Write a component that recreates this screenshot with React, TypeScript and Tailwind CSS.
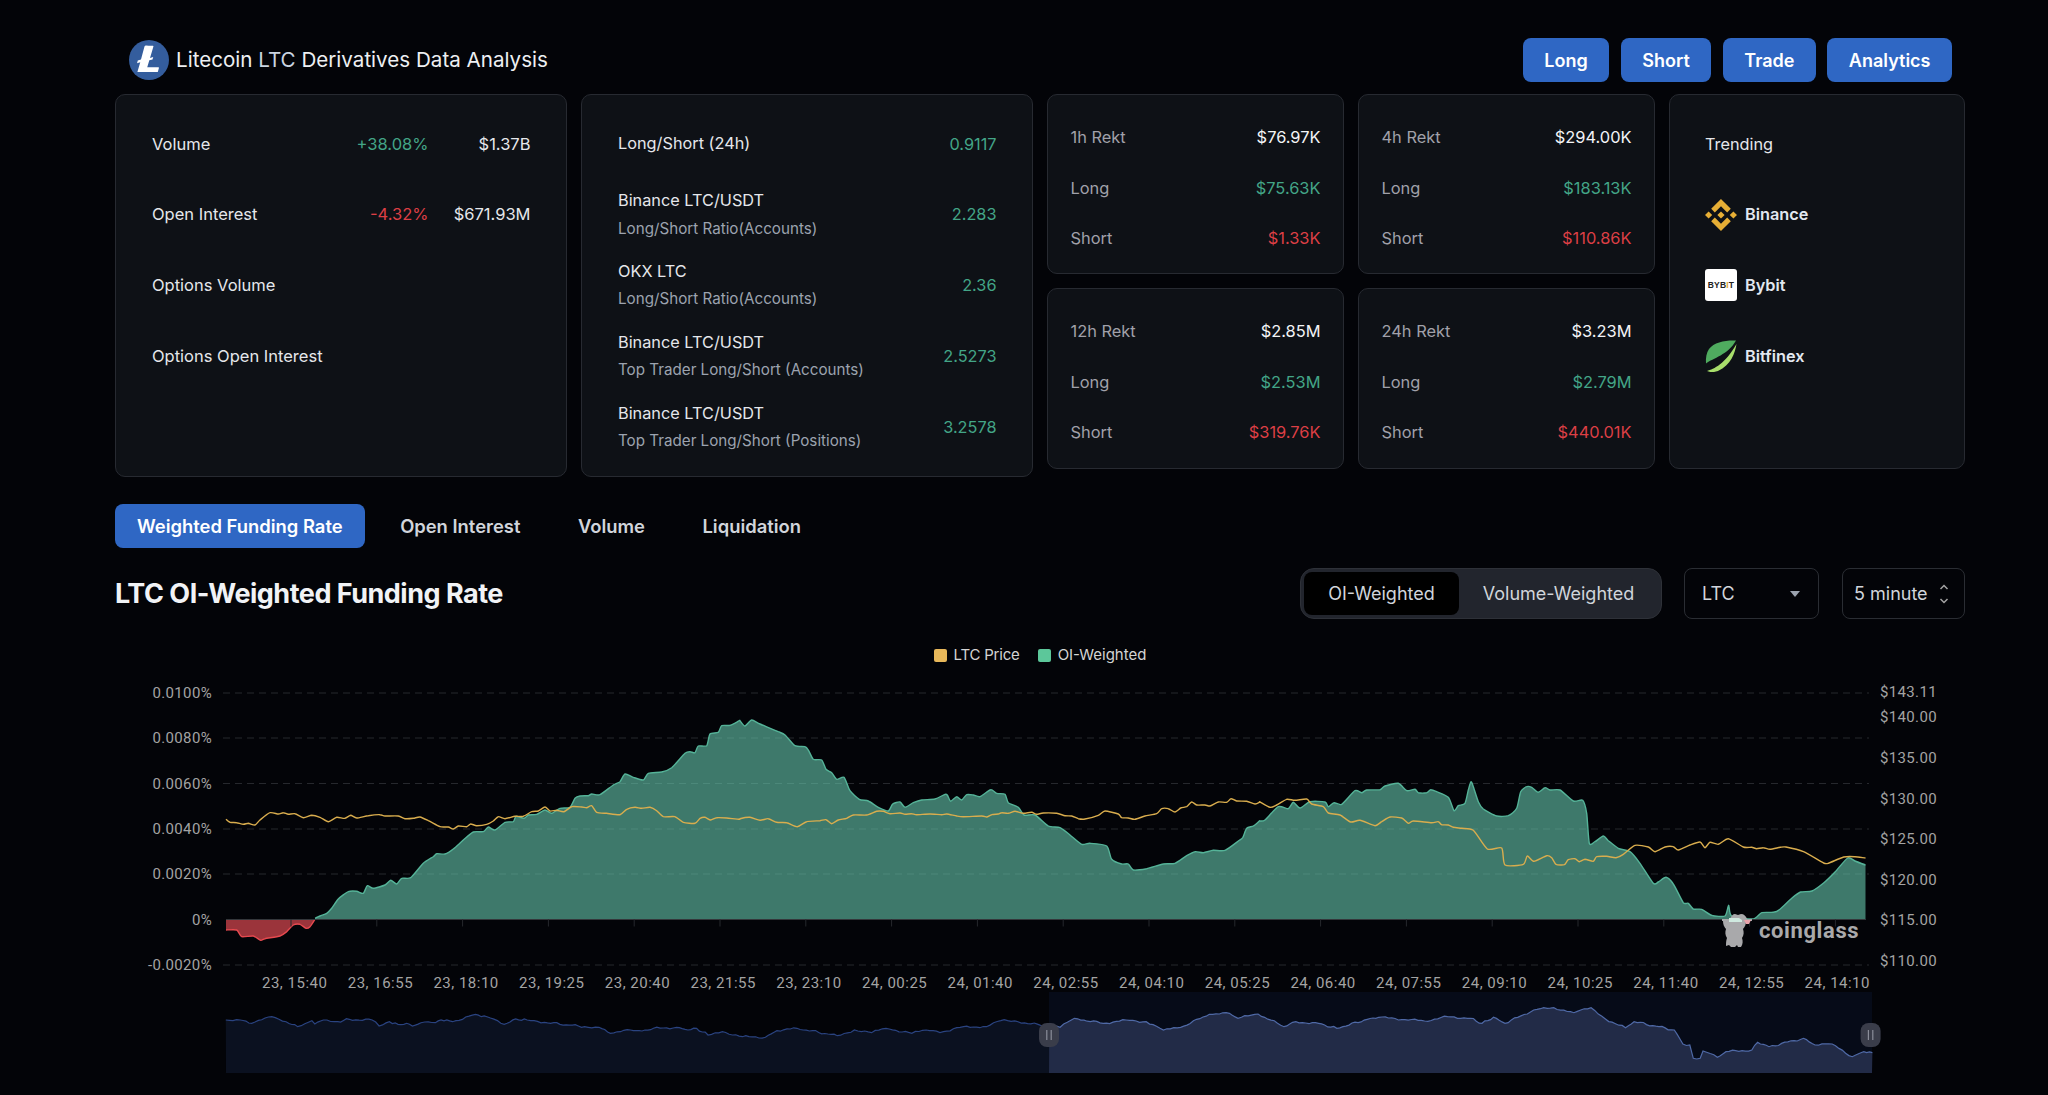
import React from "react";

type P = [number, number];
const map = (a: number[], ox: number, oy: number, sx = 3, sy = 3): P[] => {
  const r: P[] = [];
  for (let i = 0; i < a.length; i += 2) r.push([ox + a[i] / sx, oy + a[i + 1] / sy]);
  return r;
};

const smooth = (p: P[]) => {
  let d = `M${p[0][0].toFixed(1)} ${p[0][1].toFixed(1)}`;
  const k = 1 / 9;
  for (let i = 0; i < p.length - 1; i++) {
    const p0 = p[i - 1] || p[i];
    const p1 = p[i];
    const p2 = p[i + 1];
    const p3 = p[i + 2] || p2;
    const c1x = p1[0] + (p2[0] - p0[0]) * k;
    const c1y = p1[1] + (p2[1] - p0[1]) * k;
    const c2x = p2[0] - (p3[0] - p1[0]) * k;
    const c2y = p2[1] - (p3[1] - p1[1]) * k;
    d += `C${c1x.toFixed(1)} ${c1y.toFixed(1)} ${c2x.toFixed(1)} ${c2y.toFixed(1)} ${p2[0].toFixed(1)} ${p2[1].toFixed(1)}`;
  }
  return d;
};

// the overview line of the slider has a fine jagged texture
const jag = (p: P[]): P[] => {
  const out: P[] = [];
  for (let i = 0; i < p.length - 1; i++) {
    const [x0, y0] = p[i];
    const [x1, y1] = p[i + 1];
    const n = Math.max(1, Math.round((x1 - x0) / 3.2));
    for (let j = 0; j < n; j++) {
      const t = j / n;
      const x = x0 + (x1 - x0) * t;
      const noise = j === 0 ? 0 : Math.sin(x * 1.7) * 0.7 + Math.sin(x * 0.63) * 0.5;
      out.push([x, y0 + (y1 - y0) * t + noise]);
    }
  }
  out.push(p[p.length - 1]);
  return out;
};

const BASE = 919.5;

const negArea = map([18,690,50,690,65,710,100,708,122,721,135,716,180,708,200,695,220,675,240,673,258,685,270,680,285,658], 220, 700);

const posArea: P[] = [
  ...map([285,655,300,648,320,640,335,625,355,597,385,575,410,574,430,580,442,557,460,565,495,555,512,541,530,552,545,535,572,533,610,490,640,470,650,461,675,462,700,447,730,420,760,396,790,395,805,381,825,390,855,367,880,365,888,349,912,355,925,345,950,343,975,330,995,340,1020,325,1050,322,1065,295,1080,288,1105,287,1115,282,1140,284,1180,255,1200,245,1215,222,1240,232,1270,240,1285,220,1325,216,1355,203,1395,160,1410,155,1425,158,1435,138,1460,137,1470,102,1495,97,1505,77,1530,76,1558,62], 220, 700),
  ...map([0,62,15,78,35,60,60,72,115,95,135,105,165,137,195,140,205,150,220,178,245,180,258,208,275,218,290,238,312,232,330,272,358,298,385,303,415,322,445,333,458,312,480,306,495,322,520,308,545,300,585,297,615,283,622,285,632,304,650,290,665,300,680,284,700,285,720,290,752,269,770,280,795,283,805,308,835,322,852,345,885,345,925,378,960,383,990,405,1025,433,1050,430,1100,438,1115,478,1145,492,1165,492,1180,510,1220,506,1270,492,1305,490,1340,467,1365,455,1390,458,1420,451,1455,451,1495,423,1508,413,1520,385,1540,378,1558,363], 740, 700),
  ...map([0,243,15,240,55,200,85,206,100,187,120,204,150,185,195,186,205,200,222,188,245,193,285,152,305,158,320,150,360,149,375,138,415,130,440,152,465,148,475,158,500,158,512,149,530,155,565,172,582,212,595,197,615,190,625,150,633,125,640,140,655,185,670,207,710,228,745,227,770,205,782,155,800,140,815,142,835,157,855,143,870,150,900,150,940,183,968,181,980,220,988,310,1005,305,1030,288,1045,302,1075,325,1110,335,1140,370,1180,430,1195,426,1218,412,1240,432,1270,488,1285,490,1300,507,1325,508,1355,526,1395,528,1406,496,1415,528,1480,537,1505,518,1540,517,1560,508], 1260, 740),
  [1792,898],[1800.6,892],[1812,891],[1823.6,883],[1835,872],[1847.7,858],[1855,861],[1865.5,865],
];

const price: P[] = [
  ...map([18,358,30,367,50,368,70,373,85,370,105,375,120,360,150,338,175,342,190,338,205,343,225,341,250,353,275,346,300,352,325,365,350,352,375,355,392,346,410,354,445,347,480,344,495,348,535,348,555,356,580,355,600,351,625,362,660,380,685,381,700,387,715,378,740,380,752,372,770,377,800,373,820,363,835,350,855,356,885,349,910,349,935,335,955,333,975,321,990,333,1010,331,1032,335,1055,320,1085,321,1100,323,1115,317,1130,337,1160,340,1200,344,1220,328,1245,322,1265,325,1290,322,1310,332,1330,350,1365,350,1390,367,1425,370,1440,355,1455,352,1472,360,1490,353,1520,354,1558,358], 220, 700),
  ...map([0,356,30,352,60,361,85,356,110,367,140,368,172,380,200,365,240,362,258,359,275,371,295,360,320,355,340,345,380,345,410,334,430,334,450,341,480,339,495,343,515,341,530,344,570,342,605,344,620,342,650,348,670,350,725,348,740,351,755,344,775,342,785,338,805,340,825,334,850,340,875,337,890,343,910,339,950,340,975,347,995,348,1015,356,1035,357,1075,346,1095,333,1135,342,1145,353,1165,354,1185,358,1215,348,1250,341,1265,326,1285,326,1305,336,1322,324,1340,320,1355,306,1370,315,1395,315,1410,318,1435,306,1460,307,1473,296,1490,303,1520,304,1545,312,1558,307], 740, 700),
  ...map([0,186,30,202,50,195,80,178,105,181,140,177,155,192,190,200,205,219,240,225,272,246,300,241,345,257,365,245,390,231,425,234,445,250,460,243,515,248,535,245,545,254,565,255,580,262,605,265,640,271,682,327,725,324,735,375,790,373,802,348,822,364,860,347,875,353,888,373,913,374,925,359,945,356,958,365,975,358,1000,364,1010,350,1040,349,1068,353,1090,343,1125,316,1165,321,1185,335,1215,321,1240,320,1255,330,1290,315,1320,306,1335,323,1350,307,1375,313,1405,296,1450,321,1475,322,1490,326,1510,323,1530,328,1560,322], 1260, 740),
  [1786,847],[1803.5,851.7],[1823.6,863],[1829,863],[1843.7,857],[1855,856.7],[1865.5,858],
];

const sliderLeft = jag(map([45,540,70,540,90,550,125,530,150,545,170,560,195,542,200,552,215,540,240,545,260,538,300,540,312,558,330,545,345,553,360,550,370,558,385,548,410,548,420,540,440,545,480,523,500,530,530,553,550,537,570,540,600,547,670,560,695,562,715,580,750,570,770,573,790,565,830,562,850,570,865,565,885,585,910,575,945,590,985,592,1005,572,1040,565,1110,587,1140,570,1170,578,1195,565,1240,580,1265,570,1295,575,1330,560,1370,560,1395,542,1425,545,1470,557,1479,558], 200, 840, 1.742, 3));
const sliderRight = jag(map([16,558,35,562,60,535,110,550,150,540,185,545,215,570,245,562,295,523,330,520,345,535,380,522,425,560,440,547,480,548,517,565,570,538,590,532,670,543,710,530,750,535,770,550,790,532,810,550,860,510,895,503,930,518,960,503,985,537,1020,563,1035,545,1105,570,1120,612,1132,615,1138,655,1150,655,1155,633,1180,652,1195,635,1240,630,1250,607,1270,620,1330,595,1350,615,1380,612,1415,650,1435,635,1450,638], 1040, 840, 1.742, 3));

const line = (p: P[]) => p.map((q) => `${q[0].toFixed(1)},${q[1].toFixed(1)}`).join(" ");

const xLabels = ["23, 15:40","23, 16:55","23, 18:10","23, 19:25","23, 20:40","23, 21:55","23, 23:10","24, 00:25","24, 01:40","24, 02:55","24, 04:10","24, 05:25","24, 06:40","24, 07:55","24, 09:10","24, 10:25","24, 11:40","24, 12:55","24, 14:10"];
const leftLabels: [string, number][] = [["0.0100%",693],["0.0080%",738],["0.0060%",783.5],["0.0040%",829],["0.0020%",874],["0%",919.5],["-0.0020%",965]];
const rightLabels: [string, number][] = [["$143.11",692],["$140.00",717],["$135.00",758],["$130.00",799],["$125.00",839],["$120.00",880],["$115.00",920],["$110.00",961]];

function Chart() {
  return (
    <svg viewBox="115 666 1850 414" className="block w-[1850px] h-[414px]" style={{ fontFamily: "Roboto, sans-serif" }}>
      {leftLabels.filter((l) => l[0] !== "0%").map(([, y]) => (
        <line key={y} x1="223" x2="1869" y1={y} y2={y} stroke="#26282d" strokeWidth="1" strokeDasharray="7 5" />
      ))}
      <path d={smooth(posArea) + `L1865.5 ${BASE}L${posArea[0][0]} ${BASE}Z`} fill="#65c8ae" fillOpacity="0.6" />
      <path d={smooth(negArea) + `L226 ${BASE}L226 ${negArea[0][1]}Z`} fill="#f9525a" fillOpacity="0.62" />
      <path d={smooth(posArea)} fill="none" stroke="#55b398" strokeWidth="1.4" />
      <path d={smooth(negArea)} fill="none" stroke="#e6494f" strokeWidth="1.4" />
      <line x1="226" x2="1866" y1={BASE} y2={BASE} stroke="#34373b" strokeWidth="1.2" />
      {xLabels.map((_, i) => (
        <line key={i} x1={291 + i * 85.8} x2={291 + i * 85.8} y1={BASE} y2={BASE + 7} stroke="#26282d" />
      ))}
      <path d={smooth(price)} fill="none" stroke="#d9ad4e" strokeWidth="1.4" />

      {/* watermark mascot */}
      <g>
        <path d="M1722 919h8c1-3 3-5 5-5l3 1 3-1c3 0 5 2 6 5h5v2h-6c0 3-1 6-3 8 1 3 1 6-1 9 1 3 1 6-1 9h-3l-1-2-2 2h-4l-2-2-3 1c0-3 0-5 1-8-2-3-2-6-1-9-2-2-3-5-3-8h-1z" fill="#a9a9ab" />
        <path d="M1729 918h10l3 2v2h-13z" fill="#cfe9df" />
        <path d="M1744 920h7l-2 4h-3z" fill="#e9a3ab" />
      </g>
      <text x="1759" y="938" fontSize="22" fontWeight="700" fill="#a9a9ab" letterSpacing="0.6">coinglass</text>

      {leftLabels.map(([t, y]) => (
        <text key={t} x="212" y={y + 5} textAnchor="end" fontSize="15" fill="#a3a3a3" letterSpacing="0.35">{t}</text>
      ))}
      {rightLabels.map(([t, y]) => (
        <text key={t} x="1880" y={y + 5} fontSize="15" fill="#a3a3a3" letterSpacing="0.35">{t}</text>
      ))}
      {xLabels.map((t, i) => (
        <text key={t} x={294.7 + i * 85.7} y="988" textAnchor="middle" fontSize="15" fill="#a3a3a3" letterSpacing="0.5">{t}</text>
      ))}

      {/* range slider */}
      <rect x="1049" y="992" width="823" height="81" fill="#060b18" />
      <polygon points={`226,1073 ${line(sliderLeft)} 1049,1073`} fill="#0b1120" />
      <polygon points={`1049,1073 ${line(sliderRight)} 1872,1073`} fill="#222b47" />
      <polyline points={line(sliderLeft)} fill="none" stroke="#2a4380" strokeWidth="1.2" />
      <polyline points={line(sliderRight)} fill="none" stroke="#4f69a6" strokeWidth="1.2" />
      {[1049, 1870.6].map((x) => (
        <g key={x}>
          <rect x={x - 10} y="1023" width="20" height="24" rx="8" fill="#3a3d4a" />
          <line x1={x - 2.2} x2={x - 2.2} y1="1030" y2="1040" stroke="#8b8e9a" strokeWidth="1.2" />
          <line x1={x + 2.2} x2={x + 2.2} y1="1030" y2="1040" stroke="#8b8e9a" strokeWidth="1.2" />
        </g>
      ))}
    </svg>
  );
}

const G = "text-[#43a587]";
const R = "text-[#dc3f45]";
const card = "bg-[#0e1116] border border-[#272a31] rounded-[10px]";

function Btn({ children }: { children: React.ReactNode }) {
  return (
    <div className="h-[44px] px-[21.5px] flex items-center bg-[#2f67c4] rounded-[8px] text-white text-[18px] font-semibold">
      {children}
    </div>
  );
}

function Stat({ label, pct, pctClass, val }: { label: string; pct?: string; pctClass?: string; val?: string }) {
  return (
    <div className="h-[70.8px] flex items-center text-[16.5px] text-[#e5e7eb]">
      <span className="flex-1">{label}</span>
      {pct && <span className={`${pctClass}`}>{pct}</span>}
      {val && <span className="w-[102px] text-right">{val}</span>}
    </div>
  );
}

function Ratio({ a, b, v }: { a: string; b?: string; v: string }) {
  return (
    <div className="h-[70.8px] flex items-center justify-between">
      <div>
        <div className="text-[16.3px] leading-[27.5px] text-[#e5e7eb]">{a}</div>
        {b && <div className="text-[15.2px] leading-[27.5px] text-[#9ca3af]">{b}</div>}
      </div>
      <span className={`text-[16.3px] ${G}`}>{v}</span>
    </div>
  );
}

function Rekt({ t, v, l, s }: { t: string; v: string; l: string; s: string }) {
  const row = "h-[50.5px] flex items-center justify-between text-[16.4px]";
  return (
    <div className={`${card} pl-[22.5px] pr-[22px] pt-[17.5px]`}>
      <div className={row}>
        <span className="text-[#a1a1aa]">{t}</span>
        <span className="text-[#f3f4f6]">{v}</span>
      </div>
      <div className={row}>
        <span className="text-[#a1a1aa]">Long</span>
        <span className={G}>{l}</span>
      </div>
      <div className={row}>
        <span className="text-[#a1a1aa]">Short</span>
        <span className={R}>{s}</span>
      </div>
    </div>
  );
}

function Trend({ icon, name }: { icon: React.ReactNode; name: string }) {
  return (
    <div className="h-[70.8px] flex items-center gap-[8px]">
      {icon}
      <span className="text-[16.3px] font-semibold text-[#e2e8f0]">{name}</span>
    </div>
  );
}

const Litecoin = () => (
  <svg viewBox="0 0 24 24" className="w-[40px] h-[40px] shrink-0">
    <circle cx="12" cy="12" r="12" fill="#345d9d" />
    <path d="M11.7383 3.6777h2.584a.3425.3425 0 0 1 .33.4356l-2.0312 6.918 1.9062-.582-.4082 1.3847-1.9238.5605-1.248 4.213h6.6757a.3425.3425 0 0 1 .3288.4416l-.582 2a.4338.4338 0 0 1-.4158.3164H5.0352l1.7167-5.8242-1.9238.5879.4351-1.6776 1.9238-.5605 2.1-7.8a1 1 0 0 1 1.0138-.6118Z" transform="translate(0 -.2)" fill="#fff" />
  </svg>
);

const Binance = () => (
  <svg viewBox="0 0 24 24" className="w-[32px] h-[32px] shrink-0">
    <path fill="#e6ae35" d="M16.624 13.9202l2.7175 2.7154-7.353 7.353-7.353-7.352 2.7175-2.7164 4.6355 4.6595 4.6356-4.6595zm4.6366-4.6366L24 12l-2.7154 2.7164L18.5682 12l2.6924-2.7164zm-9.272.001l2.7163 2.6914-2.7164 2.7174v-.001L9.2721 12l2.7164-2.7154zm-9.2722-.001L5.4088 12l-2.6914 2.6924L0 12l2.7164-2.7164zM11.9885.0115l7.353 7.329-2.7174 2.7154-4.6356-4.6356-4.6355 4.6595-2.7174-2.7154 7.353-7.353z" />
  </svg>
);

const Bybit = () => (
  <div className="w-[32px] h-[32px] shrink-0 rounded-[3px] bg-white flex items-center justify-center text-[#222] text-[8.5px] font-bold tracking-[0.2px]" style={{ fontFamily: "'Liberation Sans', sans-serif" }}>
    BYB<span className="text-[#e6a52e]">I</span>T
  </div>
);

const Bitfinex = () => (
  <svg viewBox="0 0 32 32" className="w-[32px] h-[32px] shrink-0">
    <path fill="#4fab5f" d="M31 .5C21 0 9 2 4 9 1.500 12.500.500 18 1 23.500 8 18 23 15 31 .5z" />
    <path fill="#a8de6b" d="M31.500 4C30 13 26 25 13 31c-4 1.500-8 1.500-11 0 7-2 18-7 29.500-27z" />
  </svg>
);

export default function App() {
  return (
    <div className="w-[2048px] h-[1095px] overflow-hidden bg-[#030408] text-[#e5e7eb]" style={{ fontFamily: "Inter, sans-serif" }}>
      <div className="ml-[115px] w-[1850px] pt-[38px]">
        <div className="h-[44px] flex items-center">
          <div className="ml-[14px] flex items-center gap-[7px]">
            <Litecoin />
            <span className="text-[20.6px] text-[#eef0f3]">
              Litecoin <span className="text-[#cbd5e1]">LTC</span> Derivatives Data Analysis
            </span>
          </div>
          <div className="ml-auto mr-[13px] flex gap-[11.5px]">
            <Btn>Long</Btn>
            <Btn>Short</Btn>
            <Btn>Trade</Btn>
            <Btn>Analytics</Btn>
          </div>
        </div>

        <div className="mt-[12px] h-[383px] grid grid-cols-[451.5px_451.5px_296.5px_296.5px_296px] grid-rows-[180px_181px] gap-x-[14.5px] gap-y-[14px] content-start">
          <div className={`${card} row-span-2 h-[383px] pl-[36px] pr-[35px] pt-[13.5px]`}>
            <Stat label="Volume" pct="+38.08%" pctClass={G} val="$1.37B" />
            <Stat label="Open Interest" pct="-4.32%" pctClass={R} val="$671.93M" />
            <Stat label="Options Volume" />
            <Stat label="Options Open Interest" />
          </div>
          <div className={`${card} row-span-2 h-[383px] pl-[36px] pr-[35px] pt-[13.5px]`}>
            <Ratio a="Long/Short (24h)" v="0.9117" />
            <Ratio a="Binance LTC/USDT" b="Long/Short Ratio(Accounts)" v="2.283" />
            <Ratio a="OKX LTC" b="Long/Short Ratio(Accounts)" v="2.36" />
            <Ratio a="Binance LTC/USDT" b="Top Trader Long/Short (Accounts)" v="2.5273" />
            <Ratio a="Binance LTC/USDT" b="Top Trader Long/Short (Positions)" v="3.2578" />
          </div>
          <Rekt t="1h Rekt" v="$76.97K" l="$75.63K" s="$1.33K" />
          <Rekt t="4h Rekt" v="$294.00K" l="$183.13K" s="$110.86K" />
          <div className={`${card} row-span-2 px-[35px] pt-[13.5px]`}>
            <div className="h-[70.8px] flex items-center text-[16.3px] text-[#e5e7eb]">Trending</div>
            <Trend icon={<Binance />} name="Binance" />
            <Trend icon={<Bybit />} name="Bybit" />
            <Trend icon={<Bitfinex />} name="Bitfinex" />
          </div>
          <Rekt t="12h Rekt" v="$2.85M" l="$2.53M" s="$319.76K" />
          <Rekt t="24h Rekt" v="$3.23M" l="$2.79M" s="$440.01K" />
        </div>

        <div className="mt-[27px] flex gap-[13.5px] text-[18.4px] font-semibold text-[#d1d5db]">
          <div className="h-[44px] pt-[1px] px-[22px] flex items-center bg-[#2f67c4] rounded-[8px] text-white">Weighted Funding Rate</div>
          <div className="h-[44px] pt-[1px] px-[22px] flex items-center">Open Interest</div>
          <div className="h-[44px] pt-[1px] px-[22px] flex items-center">Volume</div>
          <div className="h-[44px] pt-[1px] px-[22px] flex items-center">Liquidation</div>
        </div>

        <div className="mt-[20px] h-[51px] flex items-center">
          <h2 className="pt-[1px] text-[27px] font-bold tracking-[-0.5px] text-[#f1f3f6]">LTC OI-Weighted Funding Rate</h2>
          <div className="ml-auto flex items-stretch h-[51px] text-[18px] text-[#d1d5db]">
            <div className="w-[362px] flex items-center p-[3px] bg-[#22252d] border border-[#2e3138] rounded-[14px]">
              <div className="w-[155px] h-[43px] flex items-center justify-center bg-black rounded-[8px]">OI-Weighted</div>
              <div className="flex-1 text-center">Volume-Weighted</div>
            </div>
            <div className="ml-[22px] w-[135px] border border-[#2a2d33] rounded-[8px] flex items-center justify-between pl-[17px] pr-[17px]">
              <span>LTC</span>
              <svg width="12" height="8" viewBox="0 0 12 8"><path d="M1 1h10L6 7z" fill="#9ca3af" /></svg>
            </div>
            <div className="ml-[23px] w-[123px] border border-[#2a2d33] rounded-[8px] flex items-center pl-[11px]">
              <span>5 minute</span>
              <svg className="ml-[10px]" width="12" height="22" viewBox="0 0 12 22" fill="none" stroke="#a3a3a3" strokeWidth="1.5">
                <path d="M2.5 6l3.5-3.5L9.5 6" />
                <path d="M2.5 16l3.5 3.5L9.5 16" />
              </svg>
            </div>
          </div>
        </div>

        <div className="mt-[25px] h-[22px] flex items-center justify-center text-[15px] text-[#d4d4d4]">
          <span className="w-[13px] h-[13px] rounded-[2px] bg-[#e8b85a]" />
          <span className="ml-[7px] tracking-[-0.2px]">LTC Price</span>
          <span className="ml-[18px] w-[13px] h-[13px] rounded-[2px] bg-[#5cc79a]" />
          <span className="ml-[7px]">OI-Weighted</span>
        </div>

        <Chart />
      </div>
    </div>
  );
}
